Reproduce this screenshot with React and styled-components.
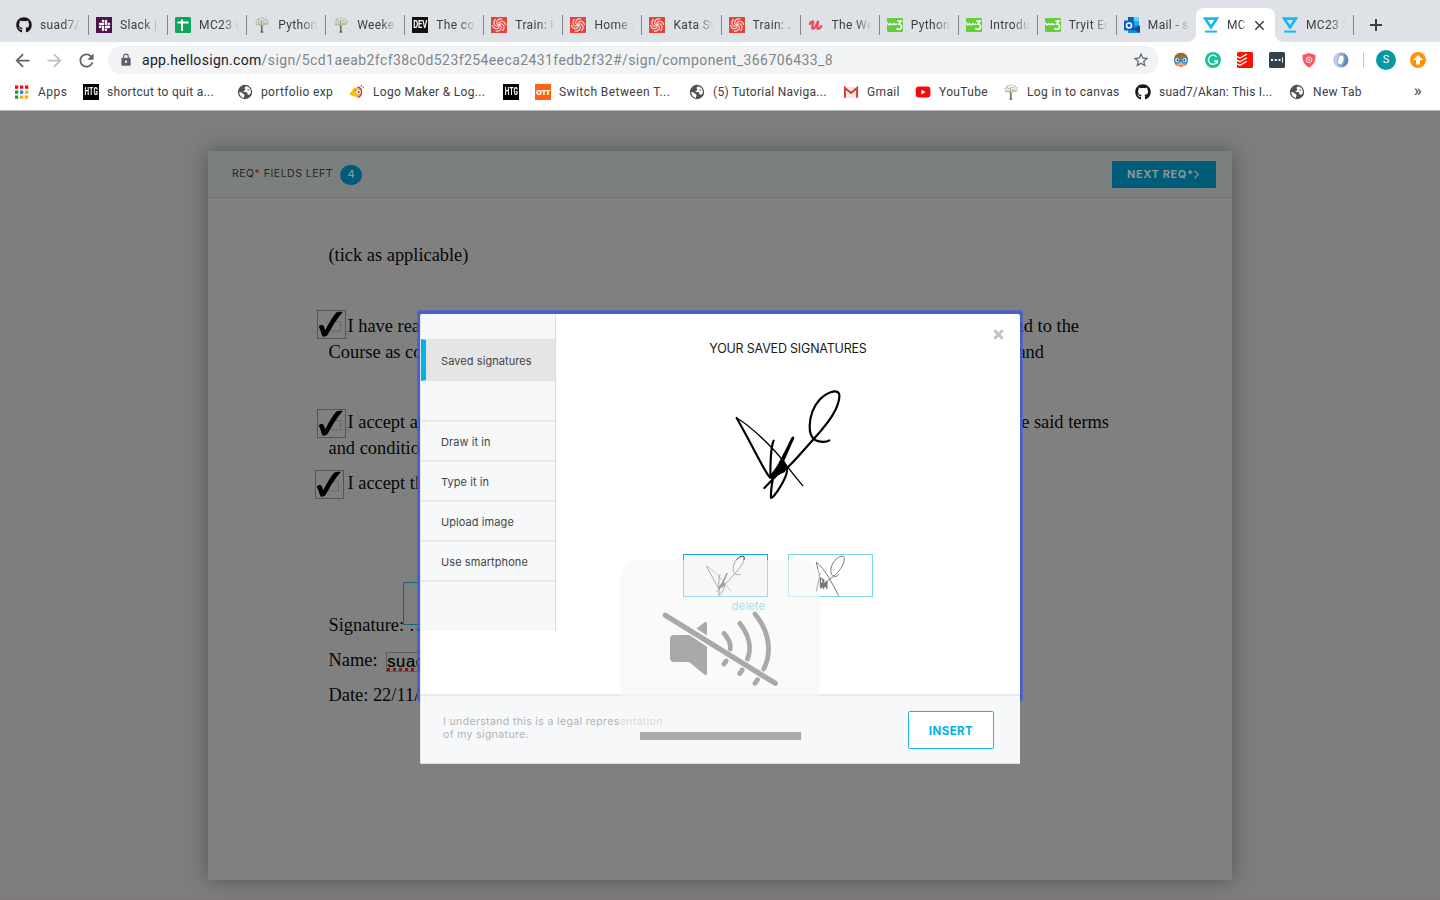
import React from "react";
import styled, { createGlobalStyle } from "styled-components";
import { FaGithub, FaSlack } from "react-icons/fa";
import { MdArrowBack, MdArrowForward, MdRefresh, MdLock, MdStarBorder } from "react-icons/md";

const Global = createGlobalStyle`
  * { box-sizing: border-box; }
  body { margin: 0; overflow: hidden; background: #7b7e7c; }
  svg { display: block; flex: none; }
`;

const chromeFont = `Roboto, "Liberation Sans", sans-serif`;
const brandFont = `Inter, "Open Sans", sans-serif`;

/* ---------- browser chrome ---------- */

const Screen = styled.div`
  position: relative;
  width: 1440px;
  height: 900px;
  display: flex;
  flex-direction: column;
  overflow: hidden;
`;

const TabStrip = styled.div`
  height: 42px;
  flex: none;
  padding: 8px 0 0 9px;
  display: flex;
  background: #dee1e6;
  font: 400 12px/16px ${chromeFont};
  letter-spacing: 0.35px;
  color: #3c4043;
`;

const TabBox = styled.div`
  position: relative;
  width: 79.07px;
  flex: none;
  height: 34px;
  padding-left: 7px;
  display: flex;
  align-items: center;
  gap: 8px;
  border-radius: 8px 8px 0 0;
  background: ${(p) => (p.$active ? "#fff" : "transparent")};
  &:first-child { width: 80px; }
`;

const TabTitle = styled.span`
  width: ${(p) => (p.$short ? 19 : 41)}px;
  overflow: hidden;
  white-space: nowrap;
  mask-image: linear-gradient(to right, #000 ${(p) => (p.$short ? 75 : 60)}%, transparent 102%);
`;

const TabDivider = styled.i`
  width: 1px;
  height: 20px;
  margin-left: auto;
  background: #808489;
`;

const TabFoot = styled.i`
  position: absolute;
  bottom: 0;
  ${(p) => p.$side}: -8px;
  width: 8px;
  height: 8px;
  background: radial-gradient(circle at ${(p) => (p.$side === "left" ? "0 0" : "100% 0")}, transparent 7.5px, #fff 8px);
`;

const NewTab = styled.div`
  display: flex;
  align-items: center;
  height: 34px;
  padding-left: 15px;
`;

const Toolbar = styled.div`
  height: 36px;
  flex: none;
  display: flex;
  align-items: center;
  background: #fff;
  padding-left: 6px;
`;

const Slot = styled.div`
  width: 32px;
  height: 32px;
  flex: none;
  display: flex;
  align-items: center;
  justify-content: center;
  color: ${(p) => p.$color || "#5f6368"};
`;

const Omnibox = styled.div`
  width: 1051px;
  height: 28px;
  margin: 0 6px 0 6px;
  padding: 0 9px 0 11px;
  display: flex;
  align-items: center;
  border-radius: 14px;
  background: #f1f3f4;
  color: #5f6368;
`;

const Address = styled.div`
  flex: 1;
  margin-left: 9px;
  font: 400 14px/20px ${chromeFont};
  letter-spacing: 0.41px;
  color: #80868b;
  white-space: nowrap;
  b { font-weight: 400; letter-spacing: 0.3px; color: #202124; }
`;

const ToolDivider = styled.i`
  width: 1px;
  height: 16px;
  margin: 0 6px;
  background: #c6c9cc;
`;

const Disc = styled.div`
  width: ${(p) => p.$size}px;
  height: ${(p) => p.$size}px;
  border-radius: 50%;
  display: flex;
  align-items: center;
  justify-content: center;
  background: ${(p) => p.$bg};
  color: #fff;
  font: 400 11px/20px ${chromeFont};
`;

const BookmarkBar = styled.div`
  height: 33px;
  flex: none;
  padding: 0 0 5px 14px;
  display: flex;
  align-items: center;
  background: #fff;
  border-bottom: 1px solid #b5b8b6;
  font: 400 12px/16px ${chromeFont};
  letter-spacing: 0.35px;
  color: #3c4043;
`;

const BookmarkItem = styled.div`
  width: ${(p) => p.$width}px;
  flex: none;
  display: flex;
  align-items: center;
  gap: 8px;
  white-space: nowrap;
  span { letter-spacing: ${(p) => p.$track ?? 0.35}px; }
`;

const More = styled.span`
  margin: 0 0 3px auto;
  padding-right: 18px;
  font-size: 17px;
`;

/* ---------- icons ---------- */

const Tile = styled.div`
  width: 16px;
  height: 16px;
  flex: none;
  display: flex;
  align-items: center;
  justify-content: center;
  overflow: hidden;
  background: ${(p) => p.$bg};
  color: #fff;
  font: 800 ${(p) => p.$font || 8}px/16px "Open Sans", sans-serif;
  letter-spacing: -0.3px;
`;

const Condensed = styled.span`
  font: 700 9px/16px Roboto, sans-serif;
  letter-spacing: -0.1px;
  transform: scale(${(p) => p.$x || 0.85}, 1.15);
`;

const Github = () => <FaGithub size={16} color="#191717" />;
const Slack = () => <Tile $bg="#4a154b"><FaSlack size={13} color="#fff" /></Tile>;
const Dev = () => <Tile $bg="#111"><Condensed>DEV</Condensed></Tile>;
const Htg = () => <Tile $bg="#000"><Condensed $x={0.72}>HTG</Condensed></Tile>;
const Ott = () => <Tile $bg="#ff5f0f" $font={7.5}>OTT</Tile>;

const Kata = () => (
  <svg width="16" height="16" viewBox="0 0 16 16">
    <rect width="16" height="16" fill="#e0463f" />
    <g fill="none" stroke="#ffd9d2" strokeWidth="1.1" strokeLinecap="round">
      {[0, 60, 120, 180, 240, 300].map((a) => (
        <path key={a} d="M8 8C7.300 5.800 8.600 4.400 10.500 4.300 12.500 4.200 14 5.600 14.600 7.600" transform={`rotate(${a} 8 8)`} />
      ))}
    </g>
  </svg>
);

const Globe = () => (
  <svg width="16" height="16" viewBox="0 0 16 16">
    <circle cx="8" cy="8" r="7.200" fill="#4d5156" />
    <path d="M9.500 2.300C7.500 3 7 4.300 8 5c1 .6.3 1.700-.8 1.700C6 6.700 6.200 8 7.300 8c2 0 3.200.3 3.200 1.800 0 1 .7 1.200 1.700.9C13.300 10 13.900 9 13.900 7.700 13.700 5 12 3 9.500 2.300z" fill="#fff" />
    <path d="M2.200 8c1.500.2 2.600.4 3.400 1.200.7.8 1.700.6 1.800 1.500.2 1-.4 1.800-.4 3.200C4.200 13.400 2.200 11 2.200 8z" fill="#fff" />
    <path d="M10.500 5.200c1-.3 1.600.4 1.300 1.200-.5.7-1.500.3-1.300-1.200z" fill="#4d5156" />
  </svg>
);

const Sheets = () => (
  <svg width="16" height="16" viewBox="0 0 16 16">
    <rect width="16" height="16" rx="1.2" fill="#0fa55b" />
    <path d="M2.5 5.5h11M7 2.5v11.5" stroke="#fff" strokeWidth="1.9" />
  </svg>
);

const Tree = () => (
  <svg width="16" height="16" viewBox="0 0 16 16">
    <g fill="none" strokeLinecap="round">
      <path d="M7.8 15V9" stroke="#6b6444" strokeWidth="1.500" />
      <path d="M7.8 10 4 6.500M7.8 9.5 11.5 5.5M7.7 9 7.3 3.5" stroke="#8d8868" strokeWidth=".8" />
      <path d="M6.8 15h2.2" stroke="#5d583f" strokeWidth="1" />
      <path d="M1.8 5.2h1.300M3.300 3h1.200M5 1.600h.8M8 1.200h1M11 2.200h1M12.800 4h1.200M13 6.500h1M2.500 7.500h1.300M5 4.600h1M9.300 3.600h1M10.800 7.400h1.500M6 7h.6M9.100 6h.5" stroke="#b0ba9b" strokeWidth="1.300" />
    </g>
  </svg>
);

const Udemy = () => (
  <svg width="16" height="16" viewBox="0 0 16 16">
    <path d="M1.800 6.800C3.200 4.500 5.400 3.400 5.200 5.500 5 7.500 3.600 9.800 4.300 11.200c.9 1.600 3.800-1 6-7.400-1.300 4.500-1.400 7.800-.2 8 1 .2 2-1 3.200-2.600" fill="none" stroke="#ec4a58" strokeWidth="2.300" strokeLinecap="round" />
  </svg>
);

const W3 = () => (
  <svg width="16" height="16" viewBox="0 0 16 16">
    <rect y="1" width="16" height="14" rx="1" fill="#63cf38" />
    <path d="M.6 5.5c.2 2.8 2.3 3 3 .5.3 2.5 2.7 2.4 3.3 0 .3 2 2 2.1 3 .6" fill="none" stroke="#fff" strokeWidth="1.3" />
    <path d="M10.300 4h3.800l-2.400 3.200c4.100 0 3.300 5.200.2 5.200-1.200 0-2-.6-2.300-1.500" fill="none" stroke="#fff" strokeWidth="1.600" />
  </svg>
);

const Outlook = () => (
  <svg width="16" height="16" viewBox="0 0 16 16">
    <path d="M4 0h11v8l1 1v7H4z" fill="#1490df" />
    <path d="M9.5 0H15v4H9.5z" fill="#50d9ff" />
    <path d="M4 0h5.5v4H4z" fill="#0a63b8" />
    <path d="M9.5 4H15v4H9.5z" fill="#28a8ea" />
    <path d="M16 8.5V16L8 12z" fill="#0f4f9e" />
    <rect y="3.5" width="10" height="10" rx=".8" fill="#0a5fc0" />
    <circle cx="5" cy="8.5" r="2.5" fill="none" stroke="#fff" strokeWidth="1.5" />
  </svg>
);

const HelloSign = () => (
  <svg width="16" height="16" viewBox="0 0 16 16">
    <path d="M2.3 1.7h11.4L8 10.3z" fill="none" stroke="#17b9f0" strokeWidth="2.7" />
    <path d="M2 14.6h12" stroke="#17b9f0" strokeWidth="2" />
  </svg>
);

const AppsGrid = () => (
  <svg width="16" height="16" viewBox="0 0 16 16">
    {["#ea0b12", "#ea0b12", "#ea0b12", "#0aa04e", "#1688f5", "#f9a912", "#0aa04e", "#f9a912", "#f9a912"].map((c, i) => (
      <rect key={i} x={1 + (i % 3) * 5} y={1.5 + Math.floor(i / 3) * 5} width="3.3" height="3.3" fill={c} />
    ))}
  </svg>
);

const LogoMaker = () => (
  <svg width="16" height="16" viewBox="0 0 16 16">
    <path d="M8.500 3.200a5.200 5.200 0 0 1 0 10" fill="none" stroke="#b01ac4" strokeWidth="1.900" />
    <circle cx="12.300" cy="1.800" r=".9" fill="#d22bd0" />
    <circle cx="14.300" cy="3.400" r=".7" fill="#d22bd0" />
    <path d="M.8 9.500C3.500 7.500 3.500 3.500 7 3.500a4.600 4.600 0 0 1 1 9.400C4.500 13 4.500 11.300.8 11z" fill="#fbbd0d" />
    <circle cx="9.300" cy="8" r="2.300" fill="#fff" />
    <circle cx="9.600" cy="8.200" r="1.100" fill="#b01ac4" />
    <circle cx="6.500" cy="6.500" r=".6" fill="#4d2a10" />
  </svg>
);

const Gmail = () => (
  <svg width="16" height="16" viewBox="0 0 16 16">
    <path d="M2 3h12v11H2z" fill="#eceaea" />
    <path d="M1.9 13.8V3.9L8 9l6.1-5.1v9.9" fill="none" stroke="#dd3a31" strokeWidth="2" />
  </svg>
);

const YouTube = () => (
  <svg width="16" height="16" viewBox="0 0 16 16">
    <rect x=".8" y="2.6" width="14.6" height="11" rx="3" fill="#f50a0a" />
    <path d="m6.4 5.7 4.3 2.4-4.3 2.4z" fill="#fff" />
  </svg>
);

const Owl = () => (
  <svg width="16" height="16" viewBox="0 0 16 16">
    <path d="M1 7C1.500 2.500 5 .8 8 .8S14.500 2.500 15 7L14 12c-1 3-11 3-12 0z" fill="#a06a25" />
    <path d="M3 10h10c0 6-10 6-10 0z" fill="#f6a679" />
    <path d="M6.300 13.800c.8.7 2.600.7 3.400 0" stroke="#e9435e" strokeWidth="1" fill="none" />
    <circle cx="4.300" cy="8.300" r="2.700" fill="#fff" stroke="#2f8fd4" strokeWidth="1.400" />
    <circle cx="11.600" cy="8.300" r="2.700" fill="#fff" stroke="#2f8fd4" strokeWidth="1.400" />
    <circle cx="4.600" cy="8.300" r="1.100" fill="#163d70" />
    <circle cx="11.300" cy="8.300" r="1.100" fill="#163d70" />
  </svg>
);

const Grammar = () => (
  <svg width="16" height="16" viewBox="0 0 16 16">
    <circle cx="8" cy="8" r="8" fill="#15c39a" />
    <path d="M11.5 5A4.5 4.5 0 1 0 12.3 9H9M12.3 8.6v2.9" fill="none" stroke="#fff" strokeWidth="1.4" />
  </svg>
);

const Todo = () => (
  <svg width="16" height="16" viewBox="0 0 16 16">
    <rect width="16" height="16" rx="1.5" fill="#f51505" />
    <path d="m0 4.7 3 1.4 6.8-4M0 8.3l3 1.4 6.8-4M0 11.9l3 1.4 6.8-4" fill="none" stroke="#fff" strokeWidth="1.3" />
  </svg>
);

const Dots = () => (
  <svg width="16" height="16" viewBox="0 0 16 16">
    <rect width="16" height="16" rx="1.5" fill="#33434f" />
    <path d="M2 7h2v2H2zM5.8 7h2v2h-2zM9.5 7h2v2h-2zM13 5.3h.9v5.4H13z" fill="#fff" />
  </svg>
);

const Shield = () => (
  <svg width="16" height="16" viewBox="0 0 16 16">
    <path d="M8 1 14.500 3c.3 6-1.500 10-6.500 12.500C3 13 1.200 9 1.500 3z" fill="#fb5864" />
    <circle cx="8" cy="7.800" r="2.900" fill="none" stroke="#ffd5d8" strokeWidth="1" />
    <circle cx="8" cy="7.800" r="1.100" fill="none" stroke="#ffd5d8" strokeWidth=".7" />
    <path d="m6 5.900 4 3.800" stroke="#ffd5d8" strokeWidth=".8" />
  </svg>
);

const Swirl = () => (
  <svg width="16" height="16" viewBox="0 0 16 16">
    <circle cx="8" cy="8" r="7.600" fill="#8fadd0" />
    <path d="M8 .6C3 1 .5 5 1 9c.3 3 3 5.500 5 6.200C3 11 4 4 8 .6z" fill="#bccfe4" />
    <path d="M8 15.400c5-.4 7.500-4.400 7-8.400-.3-3-2.500-5-4.600-6C13 5 12 12 8 15.400z" fill="#6288ba" />
    <ellipse cx="7.800" cy="8" rx="2.500" ry="4.400" fill="#fff" transform="rotate(15 8 8)" />
  </svg>
);

const UpArrow = () => (
  <svg width="12" height="12" viewBox="0 0 12 12">
    <path d="M6 1 11 6H8v4.5H4V6H1z" fill="#fff" />
  </svg>
);

const Cross = ({ size, weight, color }) => (
  <svg width={size} height={size} viewBox="0 0 10 10">
    <path d="m1.2 1.2 7.6 7.6M8.8 1.2 1.2 8.8" stroke={color} strokeWidth={weight} />
  </svg>
);

const tabs = [
  [Github, "suad7/I"], [Slack, "Slack |"], [Sheets, "MC23 ("], [Tree, "Python"],
  [Tree, "Weeke"], [Dev, "The co"], [Kata, "Train: F"], [Kata, "Home |"],
  [Kata, "Kata St"], [Kata, "Train: J"], [Udemy, "The We"], [W3, "Python"],
  [W3, "Introdu"], [W3, "Tryit Ec"], [Outlook, "Mail - s"], [HelloSign, "MC"], [HelloSign, "MC23 S"],
];
const activeTab = 15;

const bookmarks = [
  [AppsGrid, "Apps", 69, 0.45], [Htg, "shortcut to quit a...", 154, 0.3], [Globe, "portfolio exp", 112],
  [LogoMaker, "Logo Maker & Log...", 154, 0.32], [Htg, "", 32], [Ott, "Switch Between T...", 154, 0.43],
  [Globe, "(5) Tutorial Naviga...", 154, 0.28], [Gmail, "Gmail", 72], [YouTube, "YouTube", 88],
  [Tree, "Log in to canvas", 132], [Github, "suad7/Akan: This I...", 154, 0.2], [Globe, "New Tab", 90],
];

const extensions = [Owl, Grammar, Todo, Dots, Shield, Swirl];

function Browser() {
  return (
    <>
      <TabStrip>
        {tabs.map(([Icon, title], i) => {
          const active = i === activeTab;
          return (
            <TabBox key={i} $active={active}>
              <Icon />
              <TabTitle $short={active}>{title}</TabTitle>
              {active && <Cross size={11} weight={1.4} color="#3c4043" />}
              {active && <TabFoot $side="left" />}
              {active && <TabFoot $side="right" />}
              {!active && i !== activeTab - 1 && <TabDivider />}
            </TabBox>
          );
        })}
        <NewTab>
          <svg width="14" height="14" viewBox="0 0 14 14">
            <path d="M7 1v12M1 7h12" stroke="#3c4043" strokeWidth="2" />
          </svg>
        </NewTab>
      </TabStrip>
      <Toolbar>
        <Slot><MdArrowBack size={21} /></Slot>
        <Slot $color="#bcbfc2"><MdArrowForward size={21} /></Slot>
        <Slot><MdRefresh size={21} /></Slot>
        <Omnibox>
          <MdLock size={14} />
          <Address><b>app.hellosign.com</b>/sign/5cd1aeab2fcf38c0d523f254eeca2431fedb2f32#/sign/component_366706433_8</Address>
          <MdStarBorder size={18} />
        </Omnibox>
        {extensions.map((Icon, i) => <Slot key={i}><Icon /></Slot>)}
        <ToolDivider />
        <Slot><Disc $size={20} $bg="#0797a7">S</Disc></Slot>
        <Slot><Disc $size={16} $bg="#fb960b"><UpArrow /></Disc></Slot>
      </Toolbar>
      <BookmarkBar>
        {bookmarks.map(([Icon, label, width, track], i) => (
          <BookmarkItem key={i} $width={width} $track={track}>
            <Icon />
            {label && <span>{label}</span>}
          </BookmarkItem>
        ))}
        <More>»</More>
      </BookmarkBar>
    </>
  );
}

/* ---------- dimmed document ---------- */

const Page = styled.main`
  flex: 1;
  display: flex;
  justify-content: center;
  align-items: flex-start;
  padding-top: 40px;
  background: #7b7e7c;
  border-bottom: 2px solid #7c7877;
`;

const Sheet = styled.section`
  width: 1024px;
  height: 729px;
  background: #808080;
  box-shadow: 0 0 20px rgba(0, 0, 0, 0.32);
`;

const SheetHeader = styled.header`
  height: 47px;
  padding: 0 16px 0 24px;
  display: flex;
  align-items: center;
  background: #7b7f7d;
  border-bottom: 1px solid #707574;
`;

const FieldsLeft = styled.div`
  width: 108px;
  font: 400 10.5px/20px ${brandFont};
  letter-spacing: 0.5px;
  color: #272727;
  white-space: nowrap;
  i { font-style: normal; color: #8e0c18; }
`;

const Count = styled.div`
  width: 22px;
  height: 20px;
  margin-top: 1px;
  border-radius: 10px;
  background: #005c78;
  color: #8f9697;
  font: 500 11px/19px ${brandFont};
  text-align: center;
`;

const NextButton = styled.div`
  width: 104px;
  height: 27px;
  margin-left: auto;
  padding: 1px 0 0 15px;
  display: flex;
  align-items: center;
  border-radius: 1px;
  background: #005c78;
  color: #8a9698;
  font: 700 11px/27px ${brandFont};
  letter-spacing: 0.6px;
  white-space: nowrap;
`;

const Copy = styled.div`
  padding: 44px 123px 0 120.5px;
  font: 400 18.4px/26px "Liberation Serif", serif;
  color: #060608;
`;

const Line = styled.div`
  position: relative;
  display: flex;
  align-items: center;
  height: 26px;
  margin-top: ${(p) => p.$gap || 0}px;
  padding-right: ${(p) => p.$end || 0}px;
  white-space: pre;
`;

const LineEnd = styled.span`
  margin-left: auto;
`;

const TickFrame = styled.div`
  width: 29px;
  height: 29px;
  flex: none;
  margin: ${(p) => p.$shift || 0}px ${(p) => p.$right || 2}px 0 ${(p) => p.$left || -12}px;
  border: 1px solid #555;
`;

const SignField = styled.div`
  position: absolute;
  left: 74px;
  top: -30px;
  width: 120px;
  height: 43px;
  border: 1px solid #19647a;
`;

const NameField = styled.div`
  width: 120px;
  height: 20px;
  margin-left: 4px;
  margin-top: 3px;
  border: 1px solid #5c5c5c;
  font: 400 16.5px/17px "Liberation Sans", sans-serif;
  letter-spacing: 0.7px;
  color: #000;
  -webkit-text-stroke: 0.2px #000;
  u {
    text-decoration: underline dotted #8d1414 3px;
    text-decoration-skip-ink: none;
    text-underline-offset: 1px;
  }
`;

const Tick = (props) => (
  <TickFrame {...props}>
    <svg width="27" height="27" viewBox="1 1 27 27">
      <path d="M14 11.5h9.5V21H14z" fill="none" stroke="#686868" />
      <path d="M1.8 16.8c.8-2 4-2.4 5-.4l1.5 3.9C12 12.7 16 6.3 19.4 2.6c1.3-1 4.6-1.2 6.3-.7C19.6 9 14.6 17.3 11 24.3c-1 2-3.8 2.7-5.5 2.2C4.2 23.5 3.2 19 1.8 16.8z" fill="#000" />
    </svg>
  </TickFrame>
);

function Document() {
  return (
    <Page>
      <Sheet>
        <SheetHeader>
          <FieldsLeft>REQ<i>*</i> FIELDS LEFT</FieldsLeft>
          <Count>4</Count>
          <NextButton>
            NEXT REQ*
            <svg width="6" height="10" viewBox="0 0 6 10">
              <path d="M.5 .7 4.200 4.500.5 8.300" fill="none" stroke="#8a9698" strokeWidth="1.2" />
            </svg>
          </NextButton>
        </SheetHeader>
        <Copy>
          <Line>(tick as applicable)</Line>
          <Line $gap={45} $end={30}><Tick $shift={-3} />I have read<LineEnd>and to the</LineEnd></Line>
          <Line $end={65}>Course as co<LineEnd>and</LineEnd></Line>
          <Line $gap={44}><Tick $shift={3} />I accept an<LineEnd>the said terms</LineEnd></Line>
          <Line>and conditions</Line>
          <Line $gap={9}><Tick $shift={2} $left={-13.5} $right={3.5} />I accept the</Line>
          <Line $gap={116}>Signature: …<SignField /></Line>
          <Line $gap={9}>Name: <NameField><u>suad</u></NameField></Line>
          <Line $gap={9}>Date: 22/11/</Line>
        </Copy>
      </Sheet>
    </Page>
  );
}

/* ---------- signature dialog ---------- */

const FocusRing = styled.div`
  position: absolute;
  left: 417px;
  top: 310px;
  width: 606px;
  height: 392px;
  border-radius: 4px;
  background: rgba(55, 88, 224, 0.8);
  box-shadow: inset 0 0 1px 1px rgba(110, 116, 160, 0.45);
`;

const Dialog = styled.div`
  position: absolute;
  left: 420px;
  top: 314px;
  width: 600px;
  height: 450px;
  display: grid;
  grid-template: 380px 70px / 135px 1fr;
  border-left: 1px solid #e4e6ea;
  border-radius: 2px;
  overflow: hidden;
  background: #fff;
  font-family: ${brandFont};
`;

const Side = styled.nav`
  height: 317px;
  padding-top: 25px;
  background: #f7f8fa;
  border-right: 1px solid #dcdde0;
`;

const SideItem = styled.div`
  height: ${(p) => (p.$selected ? 42 : 40)}px;
  padding-left: ${(p) => (p.$selected ? 15 : 20)}px;
  margin-bottom: ${(p) => (p.$selected ? 39 : 0)}px;
  border-left: ${(p) => (p.$selected ? "5px solid #00b3e6" : "0")};
  border-top: ${(p) => (p.$selected ? 1 : 2)}px solid ${(p) => (p.$selected ? "#e0e0e0" : "#e9eaeb")};
  border-bottom: ${(p) => (p.$selected ? "1px solid #e0e0e0" : "0")};
  background: ${(p) => (p.$selected ? "#e5e5e5" : "transparent")};
  font-size: 11px;
  line-height: ${(p) => (p.$selected ? 42 : 41)}px;
  letter-spacing: 0.08px;
  color: #444;
`;

const SideEnd = styled.div`
  border-top: 2px solid #e9eaeb;
`;

const Main = styled.section`
  position: relative;
  display: flex;
  flex-direction: column;
  align-items: center;
`;

const Title = styled.h1`
  margin: 25px 0 0;
  font-size: 12.5px;
  font-weight: 400;
  line-height: 20px;
  letter-spacing: -0.2px;
  color: #1a1a1a;
`;

const Close = styled.div`
  position: absolute;
  right: 16px;
  top: 15px;
`;

const BigSignature = styled.div`
  margin: 21px 0 0 4px;
`;

const Thumbs = styled.div`
  margin-top: 44px;
  margin-right: 20px;
  display: flex;
  gap: 20px;
`;

const Thumb = styled.div`
  width: 85px;
  height: 43px;
  display: flex;
  align-items: center;
  justify-content: center;
  overflow: hidden;
  border: 1px solid ${(p) => (p.$selected ? "#16b0df" : "#7dd6f0")};
  background: ${(p) => (p.$selected ? "#f4f7fa" : "#fff")};
`;

const Delete = styled.div`
  margin: 1px 79px 0 0;
  font-size: 11px;
  line-height: 17px;
  letter-spacing: 0.2px;
  color: #14b8e8;
`;

const Footer = styled.footer`
  grid-column: 1 / -1;
  padding: 0 26px 0 22px;
  display: flex;
  align-items: center;
  justify-content: space-between;
  background: #f7f8fa;
  border-top: 2px solid #e9eaeb;
  border-bottom: 1px solid #dfe1e4;
`;

const Legal = styled.p`
  margin: 0 0 3px;
  font-size: 10.5px;
  line-height: 13px;
  letter-spacing: 0.36px;
  color: #b0b2b4;
`;

const Insert = styled.div`
  width: 86px;
  height: 38px;
  border: 1px solid #1bb6e8;
  border-radius: 2px;
  background: #fff;
  color: #00b3e6;
  font-size: 11.5px;
  font-weight: 700;
  line-height: 39px;
  letter-spacing: 0.45px;
  text-align: center;
`;

const Signature = ({ width, height, color, boost = 1 }) => (
  <svg width={width} height={height} viewBox="0 0 420 390">
    <g fill="none" stroke={color} strokeLinecap="round" strokeLinejoin="round" strokeWidth={6.5 * boost}>
      <path d="M149 291C137 281 105 211 50 114" />
      <path d="M50 114C90 136 165 208 192 247Q220 283 248 317" strokeWidth={4 * boost} />
      <path d="M161 182C150 205 152 250 151 290" />
      <path d="M219 174 162 284" strokeWidth={8 * boost} />
      <path d="M217 177 187 245 160 289" strokeWidth={9 * boost} />
      <path d="M133 324 195 260M152 292 193 247M155 293 198 266M160 288 192 272" />
      <path d="M150 292 172 262 196 254 192 274z" fill={color} />
      <path d="M159 294C155 315 152 335 153 354 160 356 211 282 199 263" />
      <path d="M152 292C202 275 225 238 282 176 300 156 334 115 345 92 354 75 361 50 357 41 350 25 317 39 298 60 277 84 270 110 269 137 268 161 275 174 287 181 302 188 320 186 328 181" />
    </g>
  </svg>
);

const SecondSignature = () => (
  <svg width="83" height="41" viewBox="3 3 249 123">
    <g fill="none" stroke="#777" strokeWidth="3" strokeLinecap="round" strokeLinejoin="round">
      <path d="M151 124C132 86 110 43 85 25L100 92M85 113 96 59" />
      <path d="M85 108 96 70 98 101 108 78 99 74M98 101 117 83 106 103 104 80M117 85 116 102M96 88 112 96M108 90 118 100" strokeWidth="4" />
      <path d="M96 94C122 81 170 48 169 11 167-1 142 12 134 29 125 47 128 63 136 66 142 69 148 67 152 62" />
    </g>
  </svg>
);

function SignatureDialog() {
  return (
    <>
      <FocusRing />
      <Dialog>
        <Side>
          <SideItem $selected>Saved signatures</SideItem>
          <SideItem>Draw it in</SideItem>
          <SideItem>Type it in</SideItem>
          <SideItem>Upload image</SideItem>
          <SideItem>Use smartphone</SideItem>
          <SideEnd />
        </Side>
        <Main>
          <Close><Cross size={11} weight={2.6} color="#c1c1c1" /></Close>
          <Title>YOUR SAVED SIGNATURES</Title>
          <BigSignature><Signature width={140} height={130} color="#000" /></BigSignature>
          <Thumbs>
            <Thumb $selected><Signature width={52} height={48} color="#222" boost={1.15} /></Thumb>
            <Thumb><SecondSignature /></Thumb>
          </Thumbs>
          <Delete>delete</Delete>
        </Main>
        <Footer>
          <Legal>I understand this is a legal representation<br />of my signature.</Legal>
          <Insert>INSERT</Insert>
        </Footer>
      </Dialog>
    </>
  );
}

/* ---------- muted volume bezel ---------- */

const Bezel = styled.div`
  position: absolute;
  left: 620px;
  top: 560px;
  width: 200px;
  height: 200px;
  border-radius: 18px;
  background: rgba(246, 246, 245, 0.6);
`;

const Level = styled.div`
  width: 161px;
  height: 8px;
  margin: 2px 0 0 20px;
  background: #a9a9a9;
`;

function VolumeBezel() {
  return (
    <Bezel>
      <svg width="200" height="170" viewBox="0 0 200 170">
        <path d="M54 75h15.3L87 86.7v26.5c0 1.8-1.5 2.4-2.7 1.4L69 102H54c-2.5 0-4-1.5-4-4V79c0-2.5 1.5-4 4-4zM76.5 68.5l7.8-6.1c1.2-.9 2.7-.3 2.7 1.2v12z" fill="#a9a9a9" />
        <g fill="none" stroke="#a9a9a9" strokeWidth="4.8" strokeLinecap="round">
          <path d="M104 73.3C109 79 111 84 110.2 89M106.2 101 104 104" />
          <path d="M119.7 63.3C129 75 132 88 127.4 99M122.3 110 119.7 113.7" />
          <path d="M135 54C149 71 152.5 92 143.7 109M137.5 119.7 135 123.3" />
          <path d="M45.3 55.3 155.3 123.3" strokeWidth="5.3" />
        </g>
      </svg>
      <Level />
    </Bezel>
  );
}

export default function App() {
  return (
    <Screen>
      <Global />
      <Browser />
      <Document />
      <SignatureDialog />
      <VolumeBezel />
    </Screen>
  );
}
